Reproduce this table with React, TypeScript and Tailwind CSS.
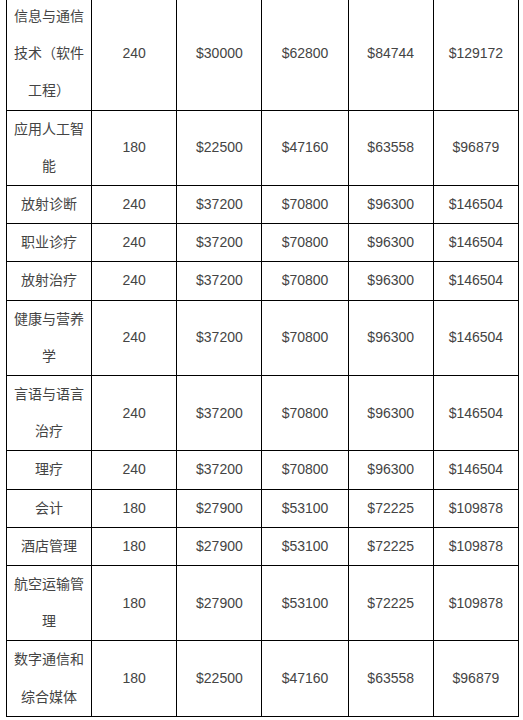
import React from 'react';

type Row = [string, string, string, string, string, string];

const rows: Row[] = [
  ['信息与通信技术（软件工程）', '240', '$30000', '$62800', '$84744', '$129172'],
  ['应用人工智能', '180', '$22500', '$47160', '$63558', '$96879'],
  ['放射诊断', '240', '$37200', '$70800', '$96300', '$146504'],
  ['职业诊疗', '240', '$37200', '$70800', '$96300', '$146504'],
  ['放射治疗', '240', '$37200', '$70800', '$96300', '$146504'],
  ['健康与营养学', '240', '$37200', '$70800', '$96300', '$146504'],
  ['言语与语言治疗', '240', '$37200', '$70800', '$96300', '$146504'],
  ['理疗', '240', '$37200', '$70800', '$96300', '$146504'],
  ['会计', '180', '$27900', '$53100', '$72225', '$109878'],
  ['酒店管理', '180', '$27900', '$53100', '$72225', '$109878'],
  ['航空运输管理', '180', '$27900', '$53100', '$72225', '$109878'],
  ['数字通信和综合媒体', '180', '$22500', '$47160', '$63558', '$96879'],
];

const App: React.FC = () => {
  return (
    <div
      className="w-[523px] h-[720px] overflow-hidden bg-white text-[#444444]"
      style={{ fontFamily: '"Liberation Sans", "Noto Sans CJK SC", sans-serif' }}
    >
      <table className="-mt-[3px] ml-[6px] w-[513px] table-fixed border-collapse">
        <colgroup>
          <col className="w-[85px]" />
          <col className="w-[85px]" />
          <col className="w-[85px]" />
          <col className="w-[86px]" />
          <col className="w-[85px]" />
          <col className="w-[85px]" />
        </colgroup>
        <tbody>
          {rows.map((row, i) => (
            <tr key={i}>
              {row.map((cell, j) => (
                <td
                  key={j}
                  className={`border border-black text-center align-middle text-[14px] leading-[37.2px] ${
                    j === 0 ? 'px-[7px] break-all' : 'px-1'
                  }`}
                >
                  {cell}
                </td>
              ))}
            </tr>
          ))}
        </tbody>
      </table>
    </div>
  );
};

export default App;
